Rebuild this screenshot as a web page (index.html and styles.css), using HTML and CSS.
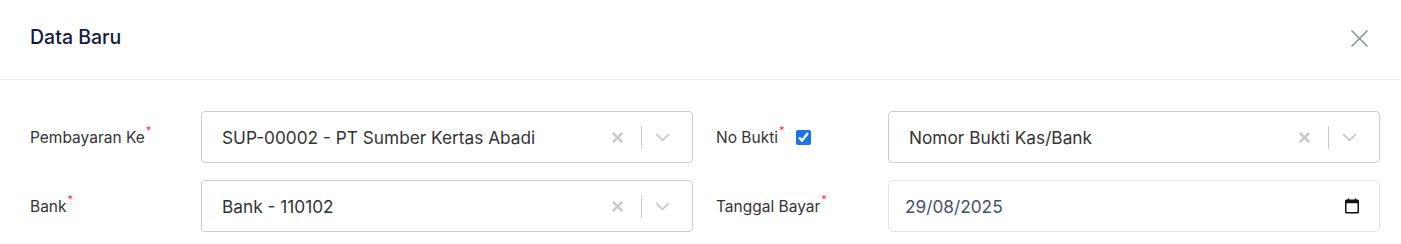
FILE: index.html
```html
<!DOCTYPE html>
<html lang="id">
<head>
<meta charset="utf-8">
<title>Data Baru</title>
<link rel="stylesheet" href="styles.css">
</head>
<body>
<div class="modal">
  <header class="modal-header">
    <h2 class="modal-title">Data Baru</h2>
    <button class="close-btn" type="button" aria-label="Tutup">
      <svg width="17" height="17" viewBox="0 0 17 17"><path d="M1 1L16 16M16 1L1 16" stroke="currentColor" stroke-width="1.7" fill="none" stroke-linecap="round"/></svg>
    </button>
  </header>
  <div class="form">
    <label class="label">Pembayaran Ke<sup class="req">*</sup></label>
    <div class="select">
      <span class="value">SUP-00002 - PT Sumber Kertas Abadi</span>
      <span class="indicators">
        <svg class="clear" width="13" height="13" viewBox="0 0 13 13"><path d="M1.8 1.8L11.2 11.2M11.2 1.8L1.8 11.2" stroke="currentColor" stroke-width="2.5" fill="none"/></svg>
        <span class="sep"></span>
        <svg class="chev" width="15" height="9" viewBox="0 0 15 9"><path d="M1.2 1.2L7.5 7.3L13.8 1.2" stroke="currentColor" stroke-width="1.8" fill="none"/></svg>
      </span>
    </div>
    <label class="label label-second">No Bukti<sup class="req">*</sup><input class="check" type="checkbox" checked></label>
    <div class="select">
      <span class="value">Nomor Bukti Kas/Bank</span>
      <span class="indicators">
        <svg class="clear" width="13" height="13" viewBox="0 0 13 13"><path d="M1.8 1.8L11.2 11.2M11.2 1.8L1.8 11.2" stroke="currentColor" stroke-width="2.5" fill="none"/></svg>
        <span class="sep"></span>
        <svg class="chev" width="15" height="9" viewBox="0 0 15 9"><path d="M1.2 1.2L7.5 7.3L13.8 1.2" stroke="currentColor" stroke-width="1.8" fill="none"/></svg>
      </span>
    </div>

    <label class="label">Bank<sup class="req">*</sup></label>
    <div class="select">
      <span class="value">Bank - 110102</span>
      <span class="indicators">
        <svg class="clear" width="13" height="13" viewBox="0 0 13 13"><path d="M1.8 1.8L11.2 11.2M11.2 1.8L1.8 11.2" stroke="currentColor" stroke-width="2.5" fill="none"/></svg>
        <span class="sep"></span>
        <svg class="chev" width="15" height="9" viewBox="0 0 15 9"><path d="M1.2 1.2L7.5 7.3L13.8 1.2" stroke="currentColor" stroke-width="1.8" fill="none"/></svg>
      </span>
    </div>
    <label class="label label-second">Tanggal Bayar<sup class="req">*</sup></label>
    <div class="date">
      <span class="date-value">29/08/2025</span>
      <svg class="cal" width="14" height="16" viewBox="0 0 14 16"><path d="M3.5 0.5V3M10.5 0.5V3" stroke="#111" stroke-width="1.5" fill="none"/><rect x="0.75" y="2.25" width="12.5" height="12.5" rx="0.8" stroke="#111" stroke-width="1.5" fill="none"/><rect x="0.75" y="2.25" width="12.5" height="3" fill="#111"/></svg>
    </div>
  </div>
</div>
</body>
</html>
```

FILE: styles.css
```css
* { box-sizing: border-box; }
html, body { margin: 0; padding: 0; background: #fff; }
body { font-family: Inter, "Noto Sans", sans-serif; color: #333; }

.modal { width: 1401px; }

.modal-header {
  height: 80px;
  display: flex;
  align-items: center;
  justify-content: space-between;
  padding: 0 33px 5px 30px;
  border-bottom: 1px solid #ececec;
}
.modal-title {
  margin: 0;
  font-size: 19.5px;
  font-weight: 500;
  color: #131c3f;
}
.close-btn {
  border: 0;
  background: none;
  padding: 0;
  color: #8a93a8;
  display: flex;
  margin-top: 3px;
  cursor: pointer;
}

.form {
  display: grid;
  grid-template-columns: 171px 492px 195px 492px;
  grid-auto-rows: 52px;
  row-gap: 17px;
  padding: 31px 21px 0 30px;
}
.label {
  display: flex;
  align-items: center;
  font-size: 15.5px;
  color: #333;
}
.label-second { padding-left: 23px; }
.req {
  color: #f0325a;
  font-size: 11px;
  align-self: flex-start;
  margin-top: 14px;
  margin-left: 1px;
  line-height: 1;
}
.check {
  width: 15px;
  height: 15px;
  margin: 0 0 0 11px;
  accent-color: #1a73e8;
}

.select {
  display: flex;
  align-items: center;
  border: 1px solid #cccccc;
  border-radius: 4px;
  padding: 0 22px 0 20px;
  font-size: 17.25px;
  color: #333;
}
.value { flex: 1; padding-top: 1px; }
.indicators {
  display: flex;
  align-items: center;
  color: #c8c8c8;
}
.sep {
  width: 1px;
  height: 23px;
  background: #cccccc;
  margin: 0 13px 0 17px;
}
.chev { margin-top: 1px; }

.date {
  display: flex;
  align-items: center;
  justify-content: space-between;
  border: 1px solid #dde2ec;
  border-radius: 6px;
  padding: 0 20px 0 16px;
  font-size: 17.25px;
}
.date-value { color: #46506f; }
```
